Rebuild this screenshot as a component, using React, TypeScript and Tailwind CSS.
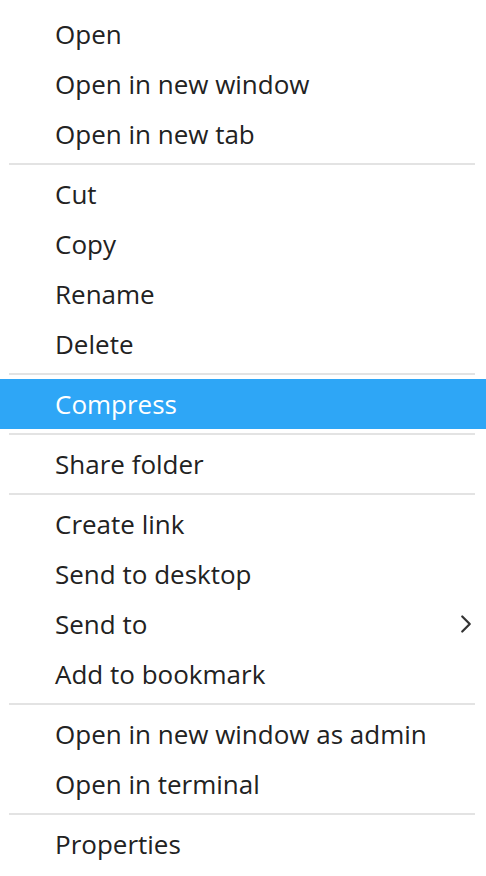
import { ChevronRight } from "lucide-react";

type Item = { label: string; active?: boolean; sub?: boolean };

const groups: Item[][] = [
  [{ label: "Open" }, { label: "Open in new window" }, { label: "Open in new tab" }],
  [{ label: "Cut" }, { label: "Copy" }, { label: "Rename" }, { label: "Delete" }],
  [{ label: "Compress", active: true }],
  [{ label: "Share folder" }],
  [
    { label: "Create link" },
    { label: "Send to desktop" },
    { label: "Send to", sub: true },
    { label: "Add to bookmark" },
  ],
  [{ label: "Open in new window as admin" }, { label: "Open in terminal" }],
  [{ label: "Properties" }],
];

function MenuItem({ item }: { item: Item }) {
  return (
    <div
      className={`h-[50px] flex items-center justify-between pl-[55px] pr-[5px] text-[26px] ${
        item.active ? "bg-[#2ea6f6] text-white" : "text-[#222222]"
      }`}
    >
      <span>{item.label}</span>
      {item.sub && <ChevronRight className="w-[30px] h-[30px] text-[#333333]" strokeWidth={1.8} />}
    </div>
  );
}

export default function App() {
  return (
    <div
      className="w-[486px] h-[876px] bg-white pt-[9px] pb-[7px] overflow-hidden"
      style={{ fontFamily: '"Open Sans", sans-serif' }}
    >
      {groups.map((group, gi) => (
        <div key={gi}>
          {gi > 0 && (
            <div className="h-[10px] flex items-center pl-[9px] pr-[11px]">
              <div className="h-[2px] w-full bg-[#e3e3e3]" />
            </div>
          )}
          {group.map((item) => (
            <MenuItem key={item.label} item={item} />
          ))}
        </div>
      ))}
    </div>
  );
}
